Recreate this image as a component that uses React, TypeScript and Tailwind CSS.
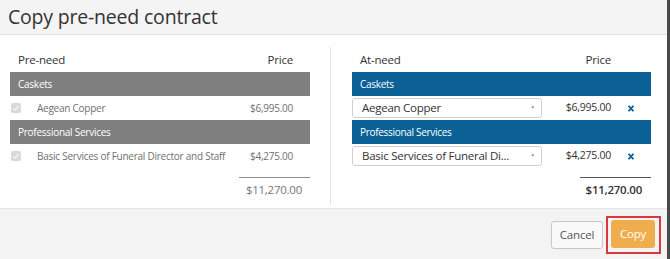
const font = { fontFamily: '"Open Sans", "Liberation Sans", sans-serif' };

type Item = { name: string; price: string };
type Group = { title: string; items: Item[] };

const GROUPS: Group[] = [
  { title: "Caskets", items: [{ name: "Aegean Copper", price: "$6,995.00" }] },
  {
    title: "Professional Services",
    items: [{ name: "Basic Services of Funeral Director and Staff", price: "$4,275.00" }],
  },
];

function DisabledCheck() {
  return (
    <span className="flex h-[10px] w-[10px] shrink-0 items-center justify-center rounded-[2px] bg-[#d9d9d9]">
      <svg width="8" height="8" viewBox="0 0 8 8">
        <path d="M1.3 4.2 L3.2 6 L6.7 1.8" fill="none" stroke="#f2f2f2" strokeWidth="1.4" />
      </svg>
    </span>
  );
}

function RemoveIcon() {
  return (
    <svg width="6" height="7" viewBox="0 0 6 7">
      <path d="M1 1.3 L5 5.7 M5 1.3 L1 5.7" stroke="#0b6196" strokeWidth="1.8" strokeLinecap="round" />
    </svg>
  );
}

function PreNeed() {
  return (
    <div className="w-[300px]">
      <div className="flex h-[25px] items-end justify-between pb-[4px] pl-[8px] pr-[17px] text-[11.5px] tracking-[-0.2px] text-[#333]">
        <span>Pre-need</span>
        <span>Price</span>
      </div>
      {GROUPS.map((g) => (
        <div key={g.title}>
          <div className="flex h-[24px] items-center bg-[#7f7f7f] pl-[8px] text-[10px] tracking-[-0.25px] text-white">{g.title}</div>
          {g.items.map((it) => (
            <div key={it.name} className="flex h-[24px] items-center whitespace-nowrap pl-[1px] pr-[17px] text-[10px] tracking-[-0.25px] text-[#707070]">
              <DisabledCheck />
              <span className="ml-[16px]">{it.name}</span>
              <span className="ml-auto">{it.price}</span>
            </div>
          ))}
        </div>
      ))}
      <div className="ml-auto mt-[9px] w-[71px] border-t border-[#8a8a8a]" />
      <div className="flex h-[24px] items-center justify-end pr-[8px] text-[11.5px] tracking-[-0.25px] text-[#777]">$11,270.00</div>
    </div>
  );
}

function AtNeed() {
  const labels = ["Aegean Copper", "Basic Services of Funeral Di..."];
  return (
    <div className="w-[299px]">
      <div className="flex h-[25px] items-end justify-between pb-[4px] pl-[8px] pr-[40px] text-[11.5px] tracking-[-0.2px] text-[#333]">
        <span>At-need</span>
        <span>Price</span>
      </div>
      {GROUPS.map((g, i) => (
        <div key={g.title}>
          <div className="flex h-[24px] items-center bg-[#0b6196] pl-[8px] text-[10px] font-medium tracking-[-0.3px] text-white">{g.title}</div>
          {g.items.map((it) => (
            <div key={it.name} className="flex h-[24px] items-center whitespace-nowrap">
              <div className="flex h-[20px] w-[190px] shrink-0 items-center rounded-[3px] border border-[#cfcfcf] bg-white pl-[9px] pr-[6px] text-[11.5px] tracking-[-0.25px] text-[#333]">
                <span>{labels[i]}</span>
                <span className="ml-auto text-[5px] text-[#999]">▼</span>
              </div>
              <span className="ml-auto text-[10.5px] tracking-[-0.25px] text-[#333]">{it.price}</span>
              <span className="ml-[17px] mr-[17px] flex w-[6px]">
                <RemoveIcon />
              </span>
            </div>
          ))}
        </div>
      ))}
      <div className="ml-auto mt-[9px] w-[71px] border-t border-[#555]" />
      <div className="flex h-[24px] items-center justify-end pr-[9px] text-[11.5px] font-semibold tracking-[-0.25px] text-[#333]">$11,270.00</div>
    </div>
  );
}

export default function App() {
  return (
    <div className="flex h-[259px] w-[670px] overflow-hidden bg-white" style={font}>
      <div className="flex w-[667px] flex-col">
        <header className="flex h-[35px] items-center border-b border-[#e2e2e2] bg-[#f4f4f4] pl-[8px] text-[19.5px] tracking-[-0.2px] text-[#333]">
          Copy pre-need contract
        </header>
        <main className="flex h-[173px] pl-[10px] pt-[12px]">
          <PreNeed />
          <div className="ml-[20px] mr-[21px] h-[158px] w-px bg-[#e3e3e3]" />
          <AtNeed />
        </main>
        <footer className="flex flex-1 items-start justify-end border-t border-[#e6e6e6] bg-[#f3f3f3] pr-[6px] pt-[7px]">
          <button className="mt-[5px] h-[28px] w-[52px] rounded-[3px] border border-[#c8c8c8] bg-[#f9f9f9] text-[11.5px] tracking-[-0.2px] text-[#555]">
            Cancel
          </button>
          <div className="ml-[3px] border-2 border-[#d8393b] pb-[4px] pl-[3px] pr-[4px] pt-[2px]">
            <button className="h-[28px] w-[44px] rounded-[3px] bg-[#f0ad4e] text-[11.5px] tracking-[-0.2px] text-white">Copy</button>
          </div>
        </footer>
      </div>
      <div className="w-[3px] bg-[#4a4a4a]" />
    </div>
  );
}
